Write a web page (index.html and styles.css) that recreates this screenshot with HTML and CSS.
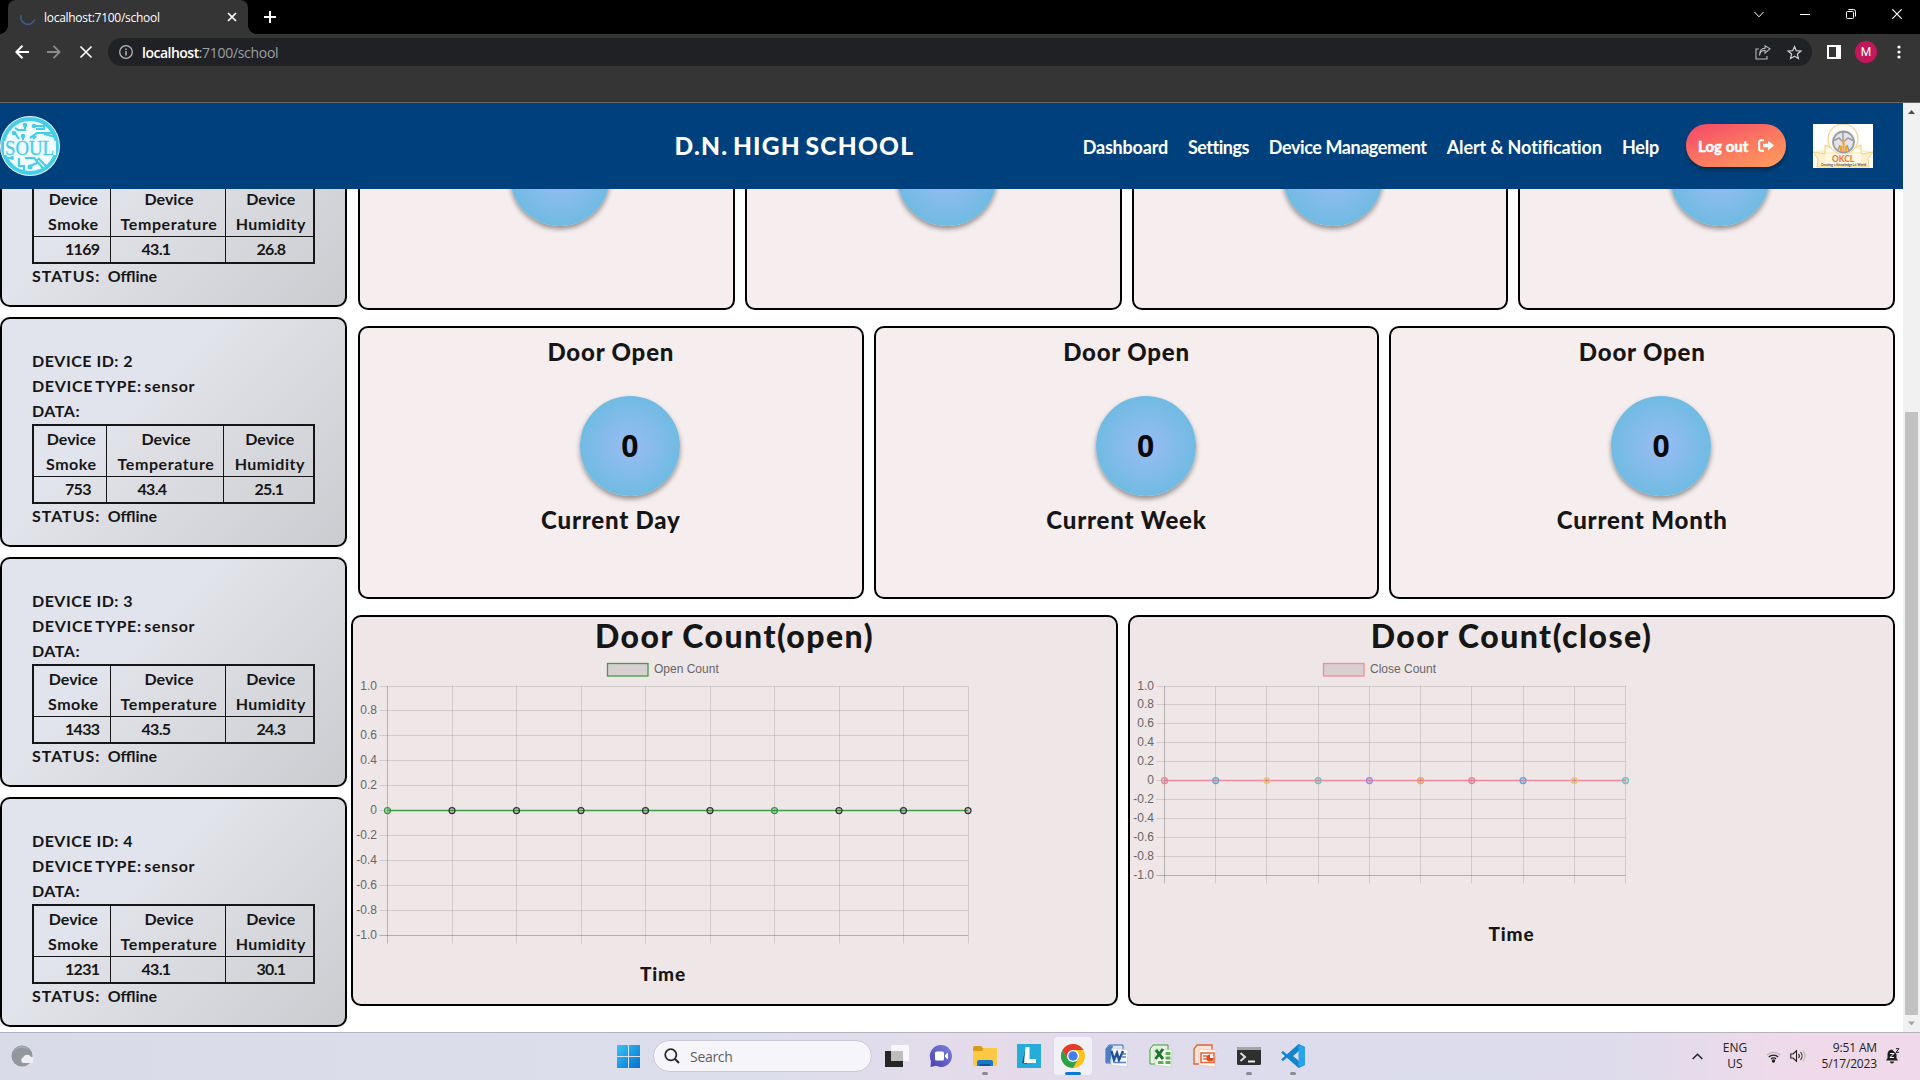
FILE: index.html
```html
<!DOCTYPE html>
<html lang="en">
<head>
<meta charset="utf-8">
<title>localhost:7100/school</title>
<link rel="stylesheet" href="styles.css">
</head>
<body>
<div class="tabstrip">
  <div class="tab">
    <svg class="spinner" width="16" height="16" viewBox="0 0 16 16"><path d="M1.2 6A7 7 0 0 0 14.6 10.500" fill="none" stroke="#3f5f8f" stroke-width="1.5"/></svg>
    <span class="tab-title">localhost:7100/school</span>
    <svg width="10" height="10" viewBox="0 0 10 10"><path d="M1 1l8 8M9 1L1 9" stroke="#fff" stroke-width="1.7"/></svg>
  </div>
  <svg class="newtab" width="12" height="12" viewBox="0 0 12 12"><path d="M6 0v12M0 6h12" stroke="#fff" stroke-width="2"/></svg>
  <div class="winctl">
    <svg width="10" height="7" viewBox="0 0 10 7"><path d="M.5 1L5 5.800 9.500 1" fill="none" stroke="#fff"/></svg>
    <svg width="10" height="10" viewBox="0 0 10 10"><path d="M0 5.500h10" stroke="#fff"/></svg>
    <svg width="10" height="10" viewBox="0 0 10 10"><rect x=".5" y="2.500" width="7" height="7" rx="1" fill="none" stroke="#fff"/><path d="M2.500.5h5a2 2 0 0 1 2 2v5" fill="none" stroke="#fff"/></svg>
    <svg width="10" height="10" viewBox="0 0 10 10"><path d="M.3.3l9.400 9.400M9.700.3L.3 9.700" stroke="#fff" stroke-width="1.2"/></svg>
  </div>
</div>
<div class="toolbar">
  <div class="navbtns">
    <svg width="14" height="14" viewBox="0 0 14 14"><path d="M14 7H1.500M7.500.8L1.300 7l6.200 6.200" fill="none" stroke="#fff" stroke-width="2"/></svg>
    <svg width="14" height="14" viewBox="0 0 14 14"><path d="M0 7h12.500M6.500.8L12.700 7l-6.200 6.200" fill="none" stroke="#8a8a8a" stroke-width="1.800"/></svg>
    <svg width="14" height="14" viewBox="0 0 14 14"><path d="M1.500 1.500l11 11M12.500 1.500l-11 11" stroke="#fff" stroke-width="1.700"/></svg>
  </div>
  <div class="omnibox">
    <svg width="14" height="14" viewBox="0 0 14 14"><circle cx="7" cy="7" r="6.300" fill="none" stroke="#b4b7bb" stroke-width="1.300"/><path d="M7 6v4.500M7 3.500V5" stroke="#b4b7bb" stroke-width="1.500"/></svg>
    <span class="url"><b>localhost</b>:7100/school</span>
    <svg class="share" width="16" height="15" viewBox="0 0 16 15"><path d="M4 4H1v10h11v-3M4.500 10.500C5 7 7 5.500 10 5.300V8l5-4.200L10 .8v2.500C6 3.500 4.500 7 4.500 10.500z" fill="none" stroke="#b9bcc0" stroke-width="1.100"/></svg>
    <svg width="15" height="15" viewBox="0 0 15 15"><path d="M7.500 1.600l1.800 4.100 4.500.4-3.400 3 1 4.400-3.900-2.300-3.900 2.300 1-4.400-3.400-3 4.500-.4z" fill="none" stroke="#c6c8cb" stroke-width="1.300"/></svg>
  </div>
  <svg class="panel" width="14" height="14" viewBox="0 0 14 14"><path d="M0 0h14v14H0zM2 2v10h7V2z" fill="#fff" fill-rule="evenodd"/></svg>
  <span class="avatar">M</span>
  <svg class="dots" width="4" height="14" viewBox="0 0 4 14" fill="#fff"><circle cx="2" cy="2" r="1.600"/><circle cx="2" cy="7" r="1.600"/><circle cx="2" cy="12" r="1.600"/></svg>
</div>

<div class="viewport">
  <div class="page">
    <header class="header">
      <svg class="soul" width="60" height="60" viewBox="0 0 60 60">
        <circle cx="30" cy="30" r="30" fill="#f0fcff"/>
        <circle cx="30" cy="30" r="27" fill="none" stroke="#45cdea" stroke-width="4"/>
        <g fill="none" stroke="#45cdea" stroke-width="2.200"><path d="M25 9v5h-7l-3-2M34 10h10v3h-8M15 17l4 6M23 20v4M30 22l7-5h16M44 18l12 3M36 20l-3 3M7 42h6M19 42v8h5v5M25 42h9l10 11M38 42l8 8M30 50l7-3v-4"/></g>
        <g fill="#45cdea"><circle cx="25" cy="9" r="2.300"/><circle cx="34" cy="10" r="2.300"/><circle cx="14" cy="17" r="2.300"/><circle cx="23" cy="20" r="2.300"/><circle cx="30" cy="51" r="2.500"/><circle cx="12" cy="42" r="2"/></g>
        <path d="M4 25h52v14H4z" fill="#f0fcff"/>
        <text x="5" y="38.500" textLength="49" lengthAdjust="spacingAndGlyphs" font-family="Liberation Serif, serif" font-size="22" fill="#45cdea" stroke="#45cdea" stroke-width=".3">SOUL</text>
      </svg>
      <h1 class="school">D.N. HIGH SCHOOL</h1>
      <nav class="nav">
        <a class="n1">Dashboard</a><a class="n2">Settings</a><a class="n3">Device Management</a><a class="n4">Alert &amp; Notification</a><a class="n5">Help</a>
      </nav>
      <div class="logout"><span>Log out</span>
        <svg width="16" height="13" viewBox="0 0 16 13"><path d="M6 1.200H3A1.800 1.800 0 0 0 1.200 3v7A1.800 1.800 0 0 0 3 11.800h3" fill="none" stroke="#fff" stroke-width="2"/><path d="M5 4.800h5V1.500l6 5-6 5V8.200H5z" fill="#fff"/></svg>
      </div>
      <svg class="okcl" width="60" height="44" viewBox="0 0 60 44">
        <path d="M0 0h60v44H0z" fill="#fff"/>
        <path d="M0 28l12 2v-9l7 3M60 28l-12 2v-9l-7 3M0 28l5 7-1 8h52l-1-8 5-7" fill="#fdf0cd" stroke="#f3cf80"/>
        <circle cx="30" cy="15" r="15" fill="#fffdf8" stroke="#f3d28c" stroke-width="1.200"/>
        <circle cx="30.500" cy="18" r="10.500" fill="#e4e4e8" stroke="#999ca5" stroke-width="1.800"/>
        <path d="M30 8v8M20 17l6-3 4 4 5-4 6 3M25 27l2-6M36 27l-2-6" stroke="#9a9ca6" fill="none" stroke-width="1.500"/>
        <path d="M30.500 16v12M28 22v5M33 22v5" stroke="#f3a32b" stroke-width="2"/>
        <path d="M12 30h36v12H12z" fill="#fff7e6"/>
        <text x="19" y="37.500" textLength="22" lengthAdjust="spacingAndGlyphs" font-family="Lato, sans-serif" font-size="10" font-weight="700" fill="#ee6a25">OKCL</text>
        <text x="8" y="41.500" textLength="45" lengthAdjust="spacingAndGlyphs" font-family="Lato, sans-serif" font-size="4" font-weight="700" fill="#444">Creating a Knowledge Lit World</text>
      </svg>
    </header>

    <main class="content">
      <aside class="devices">
        <section class="device">
          <table class="wide">
            <tr><th>Device<br><span class="sm">Smoke</span></th><th>Device<br><span class="tp">Temperature</span></th><th>Device<br><span class="hm">Humidity</span></th></tr>
            <tr><td>1169</td><td>43.1</td><td>26.8</td></tr>
          </table>
          <p><span class="st">STATUS:</span> Offline</p>
        </section>
        <section class="device">
          <p class="id">DEVICE ID: 2</p><p class="ty">DEVICE TYPE: sensor</p><p class="id">DATA:</p>
          <table>
            <tr><th>Device<br><span class="sm">Smoke</span></th><th>Device<br><span class="tp">Temperature</span></th><th>Device<br><span class="hm">Humidity</span></th></tr>
            <tr><td>753</td><td>43.4</td><td>25.1</td></tr>
          </table>
          <p><span class="st">STATUS:</span> Offline</p>
        </section>
        <section class="device">
          <p class="id">DEVICE ID: 3</p><p class="ty">DEVICE TYPE: sensor</p><p class="id">DATA:</p>
          <table class="wide">
            <tr><th>Device<br><span class="sm">Smoke</span></th><th>Device<br><span class="tp">Temperature</span></th><th>Device<br><span class="hm">Humidity</span></th></tr>
            <tr><td>1433</td><td>43.5</td><td>24.3</td></tr>
          </table>
          <p><span class="st">STATUS:</span> Offline</p>
        </section>
        <section class="device">
          <p class="id">DEVICE ID: 4</p><p class="ty">DEVICE TYPE: sensor</p><p class="id">DATA:</p>
          <table class="wide">
            <tr><th>Device<br><span class="sm">Smoke</span></th><th>Device<br><span class="tp">Temperature</span></th><th>Device<br><span class="hm">Humidity</span></th></tr>
            <tr><td>1231</td><td>43.1</td><td>30.1</td></tr>
          </table>
          <p><span class="st">STATUS:</span> Offline</p>
        </section>
      </aside>

      <div class="panels">
        <div class="row row-top">
          <div class="card"><div class="circle"></div></div>
          <div class="card"><div class="circle"></div></div>
          <div class="card"><div class="circle"></div></div>
          <div class="card"><div class="circle"></div></div>
        </div>
        <div class="row row-door">
          <div class="card"><h3>Door Open</h3><div class="circle">0</div><h3>Current Day</h3></div>
          <div class="card"><h3>Door Open</h3><div class="circle">0</div><h3>Current Week</h3></div>
          <div class="card"><h3>Door Open</h3><div class="circle">0</div><h3>Current Month</h3></div>
        </div>
        <div class="row row-charts">
          <div class="chart"><h2>Door Count(open)</h2><svg id="open" width="763" height="350" viewBox="353 654 763 350"></svg></div>
          <div class="chart"><h2>Door Count(close)</h2><svg id="close" width="763" height="350" viewBox="1130 654 763 350"></svg></div>
        </div>
      </div>
    </main>
  </div>
  <div class="scrollbar">
    <svg width="17" height="17" viewBox="0 0 17 17"><path d="M5 11l3.500-4 3.500 4z" fill="#505050"/></svg>
    <div class="thumb"></div>
    <svg width="17" height="17" viewBox="0 0 17 17"><path d="M5 6.500h7l-3.500 4z" fill="#a3a3a3"/></svg>
  </div>
</div>

<footer class="taskbar">
  <svg class="weather" width="22" height="22" viewBox="0 0 22 22"><circle cx="11" cy="11" r="10.500" fill="#92979d"/><path d="M2 6a10.500 10.500 0 0 1 17-1A16 16 0 0 0 2 6z" fill="#a9adb3"/><path d="M12 18a3 3 0 0 1 0-5.500 4.500 4.500 0 0 1 8-.5 3 3 0 0 1 1 6z" fill="#eef0f4"/></svg>
  <div class="apps">
    <svg class="start" width="23" height="23" viewBox="0 0 23 23"><defs><linearGradient id="w" x2="1" y2="1"><stop stop-color="#35c5f5"/><stop offset="1" stop-color="#0470cf"/></linearGradient></defs><path d="M0 0h11v11H0zM12 0h11v11H12zM0 12h11v11H0zM12 12h11v11H12z" fill="url(#w)"/></svg>
    <div class="search"><svg width="16" height="16" viewBox="0 0 16 16"><circle cx="6.800" cy="6.800" r="5.600" fill="none" stroke="#222" stroke-width="1.700"/><path d="M11 11l4 4" stroke="#222" stroke-width="2"/></svg><span>Search</span></div>
    <div class="app"><svg width="24" height="24" viewBox="0 0 24 24"><path d="M0 7h18v16H0z" fill="#262626"/><path d="M6 1h18v16H6z" fill="#fff" fill-opacity=".75"/><path d="M6 7h12v10H6z" fill="#bdbdbd"/></svg></div>
    <div class="app"><svg width="24" height="24" viewBox="0 0 24 24"><defs><linearGradient id="t" x1="1" x2="0" y2="1"><stop stop-color="#7a86d8"/><stop offset="1" stop-color="#4a3fb5"/></linearGradient></defs><path d="M12 1a11 11 0 1 1-5 20.800L1.500 23l.5-6A11 11 0 0 1 12 1z" fill="url(#t)"/><rect x="6" y="7.500" width="9" height="9" rx="1.500" fill="#fff"/><path d="M16 11l3-2.500v7L16 13z" fill="#fff"/></svg></div>
    <div class="app run"><svg width="24" height="24" viewBox="0 0 24 24"><path d="M0 4a2 2 0 0 1 2-2h6l3 3h11v5H0z" fill="#d99a1c"/><path d="M0 7h9l2-3h13v16a2 2 0 0 1-2 2H2a2 2 0 0 1-2-2z" fill="#fdc844"/><path d="M4 22v-4a2 2 0 0 1 2-2h12a2 2 0 0 1 2 2v4z" fill="#1a78c8"/><path d="M7 20h10v2H7z" fill="#0c5698"/></svg></div>
    <div class="app"><svg width="24" height="24" viewBox="0 0 24 24"><path d="M0 0h24v24H0z" fill="#25acd8"/><path d="M9 3L5 19l5 1z" fill="#0b5b83"/><path d="M8.500 3h4v12H19v4H7z" fill="#fff"/></svg></div>
    <div class="app active"><svg width="24" height="24" viewBox="0 0 24 24"><circle cx="12" cy="12" r="12" fill="#fcc31e"/><path d="M1.600 6A12 12 0 0 1 22.400 6H12l-5.200 9z" fill="#e33b2e"/><path d="M1.600 6A12 12 0 0 0 12 24l5.200-9H6.800z" fill="#2da14c"/><circle cx="12" cy="12" r="6" fill="#fff"/><circle cx="12" cy="12" r="4.700" fill="#3f7ff0"/></svg></div>
    <div class="app"><svg width="24" height="24" viewBox="0 0 24 24"><path d="M4 1h14v18H1V5z" fill="#dbe6f5" stroke="#3a66a8"/><path d="M1 5l4-4 3 1-3 17-4-1z" fill="#4a7fc4"/><path d="M7 4l16 2-1 17-16-2z" fill="#f6f9fd" stroke="#bbc8da" stroke-width=".6"/><path d="M6.500 7l2.500 9 3-7 2 7 4-9" fill="none" stroke="#1e4e9c" stroke-width="2.400"/><path d="M17.500 10H21M17 13h4M9 18.500h12" stroke="#5a84c0" stroke-width="1.300"/></svg></div>
    <div class="app"><svg width="24" height="24" viewBox="0 0 24 24"><path d="M4 1h15v19H1V5z" fill="#e3f2de" stroke="#3f9c3c"/><path d="M6 5l17 1-1 17-16-2z" fill="#f6fcf4" stroke="#aacfa6" stroke-width=".6"/><path d="M16.500 8h5v3h-5zM16.500 12.500h5v3h-5zM16.500 17h5v3h-5zM9 17h5.500v3H9z" fill="#5cb04f"/><path d="M7 6l7 9M14 5L6.500 15" stroke="#1d7528" stroke-width="2.900"/></svg></div>
    <div class="app"><svg width="24" height="24" viewBox="0 0 24 24"><path d="M4 1h15v19H1V5z" fill="#fbe6dc" stroke="#e0633a" stroke-width="1.400"/><path d="M6 5l17 1-1 17-16-2z" fill="#fff8f4" stroke="#e5b6a2" stroke-width=".6"/><path d="M8 9h13v9.500H8z" fill="none" stroke="#e4683d" stroke-width="1.600"/><path d="M10 12h4M10 15h4" stroke="#e4683d" stroke-width="1.400"/><circle cx="17" cy="14" r="3.600" fill="#df4c20"/><path d="M17 14v-3.500a3.500 3.500 0 0 1 3.500 3.500z" fill="#fff"/></svg></div>
    <div class="app run"><svg width="24" height="24" viewBox="0 0 24 24"><rect y="3" width="24" height="18" rx="1.500" fill="#2f2f2f"/><path d="M0 6V4.500A1.500 1.500 0 0 1 1.500 3h21A1.500 1.500 0 0 1 24 4.500V6z" fill="#a5a5a5"/><path d="M3.500 9l4.500 4-4.500 4" fill="none" stroke="#ddd" stroke-width="2"/><path d="M11 17.500h7" stroke="#eee" stroke-width="2"/></svg></div>
    <div class="app run"><svg width="24" height="24" viewBox="0 0 24 24"><path d="M17.500 0L24 3v18l-6.500 3L6 13.700 2 17l-2-1.500L4 12 0 8.500 2 7l4 3.300zM18 7l-6 5 6 5z" fill="#1484cf" fill-rule="evenodd"/><path d="M17.500 0L24 3v18l-6.500 3z" fill="#2ba3ea"/></svg></div>
  </div>
  <div class="tray">
    <svg width="11" height="7" viewBox="0 0 11 7"><path d="M.7 6L5.500 1.300 10.300 6" fill="none" stroke="#222" stroke-width="1.500"/></svg>
    <div class="lang">ENG<br>US</div>
    <svg class="wifi" width="15" height="13" viewBox="0 0 15 13" fill="none" stroke="#222" stroke-width="1.200"><path d="M.8 5.200a9.500 9.500 0 0 1 13.400 0" stroke="#bbb"/><path d="M2.800 7a6.600 6.600 0 0 1 9.400 0M5 9a3.500 3.500 0 0 1 5 0"/><circle cx="7.500" cy="11" r="1.100" fill="#222"/></svg>
    <svg class="sound" width="16" height="14" viewBox="0 0 16 14" fill="none" stroke="#222" stroke-width="1.100"><path d="M.7 5v4H3l3.500 3.200V1.800L3 5zM8.500 5a3 3 0 0 1 0 4M10.500 3a6 6 0 0 1 0 8"/><path d="M12.800 1.500a8 8 0 0 1 0 11" stroke="#bbb"/></svg>
    <div class="clock">9:51 AM<br>5/17/2023</div>
    <svg class="bell" width="14" height="16" viewBox="0 0 14 16"><path d="M6 1.500a5 5 0 0 0-4.500 5V10L0 12.500h12L10.500 10V6zM4 13.500h4a2 2 0 0 1-4 0z" fill="#1d1d1d"/><path d="M4 5.500h4L4 9.500h4" fill="none" stroke="#fff"/><path d="M10 .7h3L10 4.300h3" fill="none" stroke="#1d1d1d"/></svg>
  </div>
</footer>
<script src="charts.js"></script>
</body>
</html>
```
FILE: styles.css
```css
* { box-sizing: border-box; }
html, body { margin: 0; height: 100%; overflow: hidden; }
body { width: 1920px; height: 1080px; display: flex; flex-direction: column; background: #fff; font-family: Lato, "Liberation Sans", sans-serif; color: #161616; }
svg { display: block; flex: none; }
h1, h2, h3, p { margin: 0; }

.tabstrip { height: 34px; flex: none; background: #000; display: flex; align-items: flex-start; padding-left: 8px; }
.tab { position: relative; width: 240px; height: 34px; background: #353535; border-radius: 8px 8px 0 0; display: flex; align-items: center; padding: 0 11px 0 12px; }
.tab::before, .tab::after { content: ""; position: absolute; bottom: 0; width: 8px; height: 8px; }
.tab::before { left: -8px; background: radial-gradient(circle at 0 0, #000 7.5px, #353535 8px); }
.tab::after { right: -8px; background: radial-gradient(circle at 100% 0, #000 7.5px, #353535 8px); }
.tab-title { flex: 1; margin: 0 0 0 8px; font: 12px "Open Sans", sans-serif; letter-spacing: -.28px; color: #fff; }
.newtab { margin: 11px 0 0 16px; }
.winctl { margin-left: auto; display: flex; align-items: center; gap: 36px; height: 28px; padding-right: 18px; }

.toolbar { height: 69px; flex: none; background: #353535; border-bottom: 1px solid #666; display: flex; align-items: flex-start; padding: 4px 18px 0 15px; }
.navbtns { display: flex; gap: 18px; padding-top: 7px; width: 93px; }
.omnibox { width: 1704px; height: 28px; border-radius: 14px; background: #202124; display: flex; align-items: center; padding: 0 10px 0 11px; gap: 16px; }
.url { flex: 1; margin-left: -7px; font: 14px "Open Sans", sans-serif; letter-spacing: -.3px; color: #9aa0a6; }
.url b { color: #fff; font-weight: 600; letter-spacing: -.5px; }
.panel { margin: 7px 0 0 15px; }
.avatar { width: 22px; height: 22px; margin: 3px 0 0 14px; border-radius: 50%; background: #c2185b; color: #fff; font: 12px/22px Roboto, sans-serif; text-align: center; }
.dots { margin: 7px 1px 0 auto; }

.viewport { flex: 1; min-height: 0; display: flex; }
.page { width: 1903px; display: flex; flex-direction: column; }
.header { height: 86px; flex: none; background: #00417d; display: flex; align-items: center; color: #fff; padding-right: 30px; }
.school { margin: 0 0 0 614.500px; font-size: 24.500px; font-weight: 900; letter-spacing: 1.25px; word-spacing: -2.500px; line-height: 30px; }
.nav { margin: 1px 0 0 auto; display: flex; gap: 20px; font-size: 18px; font-weight: 700; line-height: 24px; white-space: nowrap; }
.n1 { letter-spacing: -.2px; } .n2 { letter-spacing: -.5px; } .n3 { letter-spacing: -.43px; } .n4 { letter-spacing: -.1px; } .n5 { letter-spacing: -.2px; }
.logout { width: 100px; height: 43px; margin: -1px 27px 0 27px; border-radius: 21px; background: linear-gradient(160deg, #f65068 10%, #fb7a60 55%, #ffa05c); box-shadow: 0 3px 4px rgba(0,0,0,.35); display: flex; align-items: center; gap: 10px; padding-left: 12px; font-size: 15px; font-weight: 900; }
.logout span { -webkit-text-stroke: .3px #fff; }

.content { flex: 1; min-height: 0; display: flex; overflow: hidden; }
.devices { width: 347px; flex: none; display: flex; flex-direction: column; justify-content: flex-end; gap: 10px; padding-bottom: 5px; }
.device { height: 230px; flex: none; border: 2px solid #000; border-radius: 10px; padding: 0 30px 17px; display: flex; flex-direction: column; justify-content: flex-end; background: linear-gradient(135deg, #e1e4ee 0%, #e1e4ed 38%, #e0e1e6 44%, #cbccd0 100%); font-size: 16px; font-weight: 700; line-height: 25px; }
.device p { white-space: pre; }
.device table + p { margin-top: -1px; }
.device p + table { margin-top: 1px; }
.id { letter-spacing: .5px; } .ty { letter-spacing: .68px; word-spacing: -2px; } .st { letter-spacing: .95px; margin-right: 3.500px; }
table { width: 283px; height: 80px; table-layout: fixed; border-collapse: collapse; border: 2px solid #161616; }
th, td { border: 1px solid #161616; padding: 0; font-weight: 700; vertical-align: top; }
th { padding-left: 3px; height: 51px; line-height: 25px; }
td { height: 27px; text-align: left; letter-spacing: -.7px; padding-left: 31px; line-height: 24px; }
th:nth-child(1) { width: 73px; } th:nth-child(2) { width: 117px; }
.wide th:nth-child(1) { width: 77px; } .wide th:nth-child(2) { width: 115px; }
.sm { letter-spacing: .5px; } .tp { letter-spacing: .6px; } .hm { letter-spacing: .5px; }

.panels { flex: 1; display: flex; flex-direction: column; justify-content: flex-end; gap: 16px; padding: 0 8px 26px 4px; }
.row { display: flex; flex: none; gap: 10px; padding-left: 7px; }
.card { flex: 1; border: 2px solid #000; border-radius: 10px; background: #f6edee; display: flex; flex-direction: column; align-items: center; }
.row-top { height: 254px; }
.row-door { height: 273px; }
.row-charts { height: 391px; padding-left: 0; }
.circle { width: 100px; height: 100px; flex: none; border-radius: 50%; background: radial-gradient(circle closest-side, #9abcf3, #70bbe3); box-shadow: 0 3px 5px rgba(0,0,0,.4); font: 700 30px/100px "Open Sans", sans-serif; color: #0a0a0a; text-align: center; }
.row-top .circle { margin: 68px 0 0 27px; }
.row-door .circle { margin: 29px 0 9px 38px; }
.card h3 { font-size: 24px; line-height: 30px; font-weight: 900; letter-spacing: .8px; }
.row-door .card { padding-top: 9px; }
.chart { flex: 1; border: 2px solid #000; border-radius: 10px; background: #efe6e7; }
.chart h2 { height: 37px; font-size: 32px; line-height: 38px; font-weight: 900; letter-spacing: 1.45px; text-align: center; }
.tick { font: 12px "Liberation Sans", sans-serif; fill: #666; }
.axis-title { font: 900 19px Lato, sans-serif; letter-spacing: .9px; fill: #161616; }

.scrollbar { width: 17px; background: #f1f1f1; display: flex; flex-direction: column; align-items: center; }
.thumb { width: 13px; height: 603px; margin-top: 292px; margin-bottom: auto; background: #c1c1c1; }

.taskbar { height: 48px; flex: none; border-top: 1px solid #b5b3c2; background: linear-gradient(90deg, #dadbe9 0, #dddeec 40%, #e5dbea 52%, #dddcec 64%, #dedcec 84%, #efdaea 93%, #f0d9e9 100%); display: flex; align-items: center; padding-bottom: 1px; }
.weather { margin-left: 11px; }
.apps { display: flex; align-items: center; margin-left: 584px; }
.start { margin-right: 13px; }
.search { width: 219px; height: 32px; border: 1px solid #c9c8d8; border-radius: 16px; background: #f6f5fa; display: flex; align-items: center; gap: 10px; padding-left: 10px; margin-right: 3px; font: 14px "Open Sans", sans-serif; letter-spacing: -.3px; color: #5d5d63; }
.app { position: relative; width: 38px; height: 38px; margin: 0 3px; border-radius: 4px; display: flex; align-items: center; justify-content: center; }
.active { background: #f1f0f7; }
.run::after, .active::after { content: ""; position: absolute; left: 16px; bottom: 0; width: 6px; height: 3px; border-radius: 2px; background: #8a8a90; }
.active::after { left: 11px; width: 16px; background: #0a7ad2; }
.tray { margin-left: auto; padding-right: 20px; display: flex; align-items: center; font: 12px/16px "Open Sans", sans-serif; color: #222; }
.lang { width: 28px; margin-left: 18px; text-align: center; line-height: 16px; }
.wifi { margin-left: 17px; } .sound { margin-left: 9px; }
.clock { width: 60px; margin-left: 11px; text-align: right; letter-spacing: -.15px; white-space: nowrap; }
.bell { margin-left: 9px; }
```
FILE: charts.js
```js
// Draws a flat line chart with ten points on a grid running from 1.0 to -1.0.
function drawChart(id, o) {
  const dy = (o.bottom - o.top) / 10, dx = (o.right - o.left) / 9;
  let s = '';
  for (let i = 0; i <= 10; i++) {
    const y = Math.round(o.top + i * dy - .5) + .5;
    const v = (10 - 2 * i) / 10;
    const label = v === 0 ? '0' : v.toFixed(1);
    s += `<path d="M${o.left - 8} ${y}H${o.right}" stroke="#000" stroke-opacity="${i === 10 ? .24 : .12}"/>`;
    s += `<text class="tick" x="${o.left - 10.5}" y="${y + 3}" text-anchor="end">${label}</text>`;
  }
  for (let i = 0; i < 10; i++) {
    const x = Math.round(o.left + i * dx - .5) + .5;
    s += `<path d="M${x} ${o.top}V${o.bottom + 8}" stroke="#000" stroke-opacity="${i ? .12 : .22}"/>`;
  }
  const y0 = (o.top + o.bottom) / 2 - .2;
  s += `<path d="M${o.left} ${y0}H${o.right}" stroke="${o.line}" stroke-width="1.5"/>`;
  for (let i = 0; i < 10; i++) {
    s += `<circle cx="${o.left + i * dx}" cy="${y0}" r="3" fill="#000" fill-opacity=".1" stroke="${o.points[i]}" stroke-width="1.2"/>`;
  }
  s += `<rect x="${o.legend}" y="663.5" width="40.500" height="12.500" fill="#d8cfd1" stroke="${o.line}" stroke-width="1.3"/>`;
  s += `<text class="tick" x="${o.legend + 46.500}" y="673">${o.name}</text>`;
  s += `<text class="axis-title" x="${o.timeX}" y="${o.timeY}">Time</text>`;
  document.getElementById(id).innerHTML = s;
}
const k = '#333', g = '#2f9a3c';
drawChart('open', { left: 387.5, right: 968, top: 686, bottom: 935.5, line: '#3f9f48', name: 'Open Count', legend: 607.5, timeX: 640, timeY: 981, points: [g, k, k, k, k, k, g, k, k, k] });
const pal = ['#ee7f95', '#5aa5df', '#f3c76b', '#6fc0c4', '#a182e6', '#f0a254'];
drawChart('close', { left: 1164.5, right: 1625.5, top: 686, bottom: 875.5, line: '#f58a9c', name: 'Close Count', legend: 1323.5, timeX: 1488.5, timeY: 941, points: [0,1,2,3,4,5,0,1,2,3].map(i => pal[i]) });
```
